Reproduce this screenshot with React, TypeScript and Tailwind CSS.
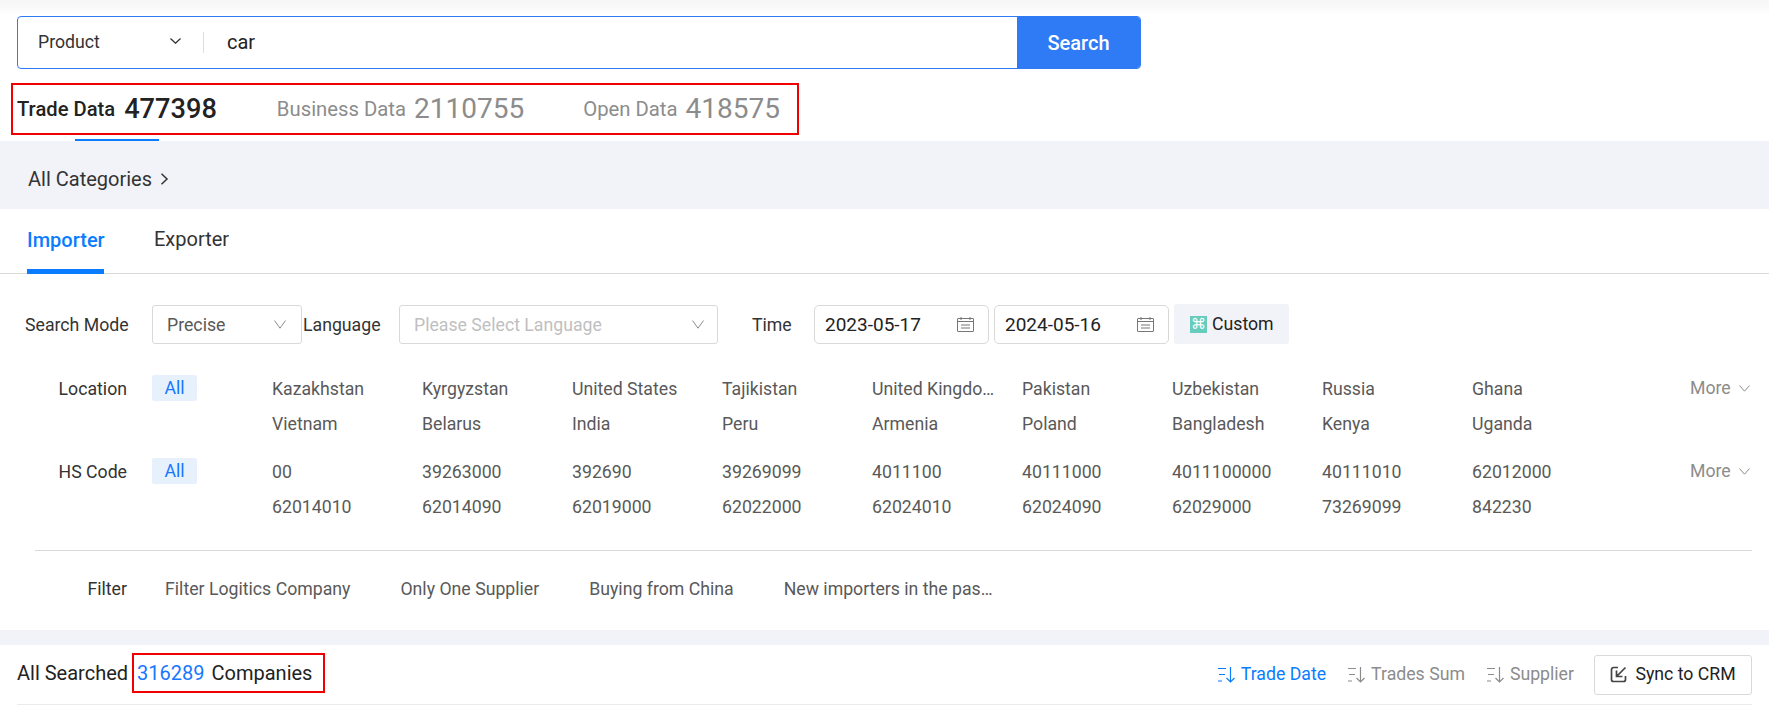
const locations = [
  ["Kazakhstan", "Vietnam"],
  ["Kyrgyzstan", "Belarus"],
  ["United States", "India"],
  ["Tajikistan", "Peru"],
  ["United Kingdo…", "Armenia"],
  ["Pakistan", "Poland"],
  ["Uzbekistan", "Bangladesh"],
  ["Russia", "Kenya"],
  ["Ghana", "Uganda"],
];

const hsCodes = [
  ["00", "62014010"],
  ["39263000", "62014090"],
  ["392690", "62019000"],
  ["39269099", "62022000"],
  ["4011100", "62024010"],
  ["40111000", "62024090"],
  ["4011100000", "62029000"],
  ["40111010", "73269099"],
  ["62012000", "842230"],
];

const filters = [
  "Filter Logitics Company",
  "Only One Supplier",
  "Buying from China",
  "New importers in the pas…",
];

const Chevron = ({ w, h, color, sw = 1 }: { w: number; h: number; color: string; sw?: number }) => (
  <svg width={w} height={h} viewBox={`0 0 ${w} ${h}`} fill="none" stroke={color} strokeWidth={sw}>
    <path d={`M0.5 0.5L${w / 2} ${h - 0.8}L${w - 0.5} 0.5`} />
  </svg>
);

const CalendarIcon = () => (
  <svg width="17" height="15" viewBox="0 0 17 15" fill="none" stroke="#777" strokeWidth="1">
    <rect x="0.5" y="1.5" width="16" height="13" rx="0.5" />
    <path d="M0.5 4.5h16M4 0v3M13 0v3M4 8h9M4 11h9" />
  </svg>
);

const SortIcon = ({ color }: { color: string }) => (
  <svg width="17" height="17" viewBox="0 0 17 17" fill="none" stroke={color} strokeWidth="1.2">
    <path d="M0 2.5h8M1 8.5h6M0 15h4M12.5 1v15M8.5 12l4 4 4-4" />
  </svg>
);

const FilterRow = ({ label, items }: { label: string; items: string[][] }) => (
  <div className="flex">
    <div className="w-[127px] shrink-0 pt-[1px] text-right leading-[26px] text-[#333]">{label}</div>
    <div className="ml-[25px] h-[26px] w-[45px] shrink-0 rounded-[2px] bg-[#e6f1fc] text-center leading-[26px] text-[#1677ff]">
      All
    </div>
    <div className="-mt-[4px] ml-[75px] grid w-[1350px] shrink-0 grid-cols-[repeat(9,150px)] auto-rows-[35px] leading-[35px] text-[#595959]">
      {[0, 1].map(r =>
        items.map(col => (
          <div key={r + col[r]} className="pt-[1px]">
            {col[r]}
          </div>
        ))
      )}
    </div>
    <div className="ml-[68px] flex h-[26px] items-center gap-[8px] text-[#8c8c8c]">
      More <Chevron w={11} h={7} color="#8c8c8c" />
    </div>
  </div>
);

export default function App() {
  return (
    <div className="h-[707px] w-[1769px] overflow-hidden bg-white font-['Roboto',sans-serif] text-[17.7px] text-[#222]">
      <div className="h-[16px] bg-gradient-to-b from-[#f6f6f6] to-white" />

      {/* search */}
      <div className="ml-[17px] flex h-[53px] w-[1124px] overflow-hidden rounded-[4px] border border-[#2f7bf6]">
        <div className="flex w-[185px] items-center justify-between pl-[20px] pr-[22px] text-[#333]">
          Product
          <span className="-mt-[4px]">
            <Chevron w={11} h={6} color="#333" sw={1.3} />
          </span>
        </div>
        <div className="my-[15px] w-px bg-[#ddd]" />
        <div className="flex flex-1 items-center pb-[2px] pl-[23px] text-[20px]">car</div>
        <div className="flex w-[123px] items-center justify-center bg-[#2f7bf6] text-[20px] font-medium text-white">
          Search
        </div>
      </div>

      {/* data tabs */}
      <div className="relative h-[72px]">
        <div className="absolute left-[11px] top-[14px] flex h-[52px] w-[788px] items-center border-2 border-[#f00000] pl-[4px]">
          <span className="text-[20.2px] font-medium">Trade Data</span>
          <span className="ml-[9px] text-[27.2px] font-medium">477398</span>
          <span className="ml-[60px] text-[20.3px] text-[#8c8c8c]">Business Data</span>
          <span className="ml-[8px] text-[28px] text-[#8c8c8c]">2110755</span>
          <span className="ml-[59px] text-[20.3px] text-[#8c8c8c]">Open Data</span>
          <span className="ml-[8px] text-[28px] text-[#8c8c8c]">418575</span>
        </div>
        <div className="absolute bottom-0 left-[75px] h-[2px] w-[84px] bg-[#0a7cff]" />
      </div>

      {/* categories */}
      <div className="flex h-[68px] items-center gap-[8px] bg-[#f2f3f8] pl-[28px] pt-[8px] text-[20px] text-[#333]">
        All Categories
        <svg width="9" height="12" viewBox="0 0 9 12" fill="none" stroke="#333" strokeWidth="1.5">
          <path d="M1.5 0.8L7 6L1.5 11.2" />
        </svg>
      </div>

      {/* importer / exporter */}
      <div className="flex h-[65px] items-end border-b border-[#d9d9d9] pl-[27px] text-[20px]">
        <div className="-mb-px h-[65px] w-[77px] border-b-[5px] border-[#0a7cff] pt-[16px] font-medium text-[#0a7cff]">
          Importer
        </div>
        <div className="ml-[50px] h-[65px] pt-[16px] text-[#333]">Exporter</div>
      </div>

      {/* search options */}
      <div className="mt-[30px] flex h-[40px] items-center">
        <div className="ml-[25px] w-[127px] pt-[2px] text-[#333]">Search Mode</div>
        <div className="flex h-[39px] w-[150px] items-center justify-between rounded-[3px] border border-[#d9d9d9] pl-[14px] pr-[15px] text-[#595959]">
          <span className="pt-[2px]">Precise</span> <Chevron w={12} h={9} color="#8c8c8c" />
        </div>
        <div className="w-[97px] pl-[1px] pt-[2px] text-[#333]">Language</div>
        <div className="flex h-[39px] w-[319px] items-center justify-between rounded-[3px] border border-[#d9d9d9] pl-[14px] pr-[13px] text-[#bfbfbf]">
          <span className="pt-[2px]">Please Select Language</span> <Chevron w={12} h={9} color="#8c8c8c" />
        </div>
        <div className="ml-[34px] w-[62px] pt-[2px] text-[#333]">Time</div>
        <div className="flex h-[39px] w-[175px] items-center justify-between rounded-[5px] border border-[#d9d9d9] pl-[10px] pr-[14px] text-[19px]">
          <span className="pt-[2px]">2023-05-17</span> <CalendarIcon />
        </div>
        <div className="ml-[5px] flex h-[39px] w-[175px] items-center justify-between rounded-[5px] border border-[#d9d9d9] pl-[10px] pr-[14px] text-[19px]">
          <span className="pt-[2px]">2024-05-16</span> <CalendarIcon />
        </div>
        <div className="ml-[5px] flex h-[40px] w-[115px] items-center gap-[5px] rounded-[3px] bg-[#f2f3f8] pl-[16px]">
          <span className="flex h-[17px] w-[17px] items-center justify-center bg-[#66cdbd] font-['DejaVu_Sans',sans-serif] text-[15px] leading-none text-white">
            ⌘
          </span>
          Custom
        </div>
      </div>

      <div className="mt-[31px] flex flex-col gap-[17px]">
        <FilterRow label="Location" items={locations} />
        <FilterRow label="HS Code" items={hsCodes} />
      </div>

      <div className="ml-[35px] mt-[26px] w-[1717px] border-t border-[#d9d9d9]" />

      <div className="flex h-[79px] items-center pb-[3px]">
        <div className="w-[127px] text-right text-[#333]">Filter</div>
        <div className="ml-[38px] flex gap-[50px] text-[#595959]">
          {filters.map(f => (
            <div key={f}>{f}</div>
          ))}
        </div>
      </div>

      <div className="h-[15px] bg-[#f2f3f8]" />

      {/* results head */}
      <div className="ml-[17px] mr-[17px] flex h-[60px] items-center justify-between border-b border-[#ebebeb]">
        <div className="flex items-center pb-[4px] text-[20px]">
          All Searched
          <span className="relative ml-[9px] text-[#1677ff]">
            316289
            <span className="ml-[7px] text-[#222]">Companies</span>
            <span className="absolute -bottom-[5px] -left-[5px] -right-[13px] -top-[5px] border-2 border-[#f00000]" />
          </span>
        </div>
        <div className="flex items-center text-[#8c8c8c]">
          <div className="flex items-center gap-[6px] text-[#0a7cff]">
            <SortIcon color="#0a7cff" /> Trade Date
          </div>
          <div className="ml-[22px] flex items-center gap-[6px]">
            <SortIcon color="#8c8c8c" /> Trades Sum
          </div>
          <div className="ml-[22px] flex items-center gap-[6px]">
            <SortIcon color="#8c8c8c" /> Supplier
          </div>
          <div className="ml-[20px] flex h-[40px] w-[158px] items-center justify-center gap-[8px] rounded-[3px] border border-[#d9d9d9] text-[#222]">
            <svg width="17" height="17" viewBox="0 0 17 17" fill="none" stroke="#444" strokeWidth="1.7">
              <path d="M8 1.5H3.5a2 2 0 0 0-2 2v10a2 2 0 0 0 2 2h10a2 2 0 0 0 2-2V10M15.5 1.5L6.5 10.5M6.5 4.5v6h6" />
            </svg>
            Sync to CRM
          </div>
        </div>
      </div>
    </div>
  );
}
